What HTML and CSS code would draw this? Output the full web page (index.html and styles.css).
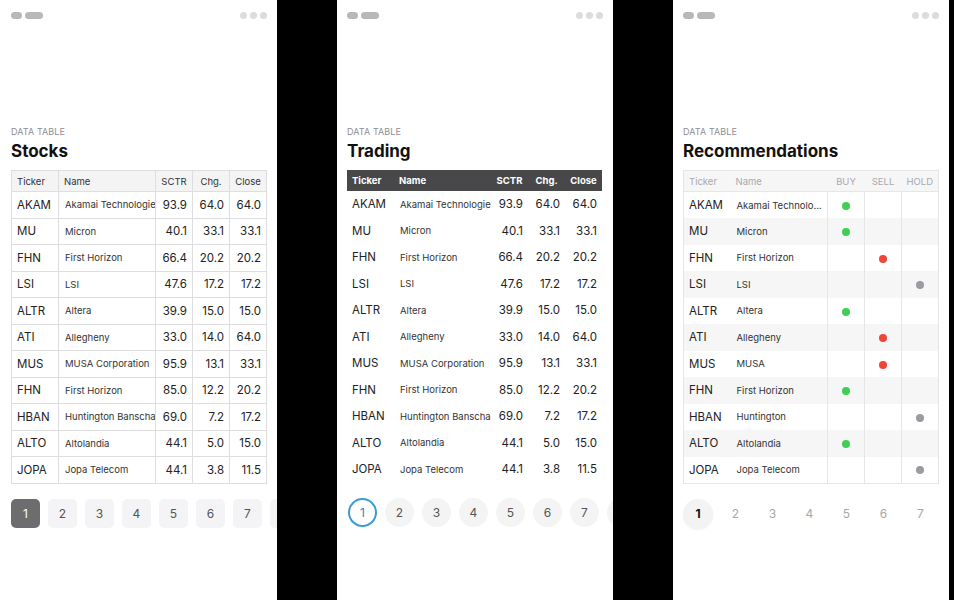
FILE: index.html
```html
<!DOCTYPE html>
<html>
<head>
<meta charset="utf-8">
<link rel="stylesheet" href="styles.css">
</head>
<body>
<div class="screens">
  <!-- Panel 1 -->
  <section class="panel">
    <div class="topbar"><div class="pills"><span class="pill s"></span><span class="pill l"></span></div><div class="dots"><span></span><span></span><span></span></div></div>
    <div class="label">DATA TABLE</div>
    <h1 class="title">Stocks</h1>
    <table class="tbl t-grid">
      <colgroup><col class="c1"><col class="c2"><col class="c3"><col class="c4"><col class="c5"></colgroup>
      <thead><tr><th>Ticker</th><th>Name</th><th class="num">SCTR</th><th class="num">Chg.</th><th class="num">Close</th></tr></thead>
      <tbody>
        <tr><td>AKAM</td><td class="nm"><div class="clip">Akamai Technologies</div></td><td class="num">93.9</td><td class="num">64.0</td><td class="num">64.0</td></tr>
        <tr><td>MU</td><td class="nm">Micron</td><td class="num">40.1</td><td class="num">33.1</td><td class="num">33.1</td></tr>
        <tr><td>FHN</td><td class="nm">First Horizon</td><td class="num">66.4</td><td class="num">20.2</td><td class="num">20.2</td></tr>
        <tr><td>LSI</td><td class="nm">LSI</td><td class="num">47.6</td><td class="num">17.2</td><td class="num">17.2</td></tr>
        <tr><td>ALTR</td><td class="nm">Altera</td><td class="num">39.9</td><td class="num">15.0</td><td class="num">15.0</td></tr>
        <tr><td>ATI</td><td class="nm">Allegheny</td><td class="num">33.0</td><td class="num">14.0</td><td class="num">64.0</td></tr>
        <tr><td>MUS</td><td class="nm">MUSA Corporation</td><td class="num">95.9</td><td class="num">13.1</td><td class="num">33.1</td></tr>
        <tr><td>FHN</td><td class="nm">First Horizon</td><td class="num">85.0</td><td class="num">12.2</td><td class="num">20.2</td></tr>
        <tr><td>HBAN</td><td class="nm"><div class="clip">Huntington Banschares</div></td><td class="num">69.0</td><td class="num">7.2</td><td class="num">17.2</td></tr>
        <tr><td>ALTO</td><td class="nm">Altolandia</td><td class="num">44.1</td><td class="num">5.0</td><td class="num">15.0</td></tr>
        <tr><td>JOPA</td><td class="nm">Jopa Telecom</td><td class="num">44.1</td><td class="num">3.8</td><td class="num">11.5</td></tr>
      </tbody>
    </table>
    <nav class="pager p-square">
      <span class="pg on">1</span><span class="pg">2</span><span class="pg">3</span><span class="pg">4</span><span class="pg">5</span><span class="pg">6</span><span class="pg">7</span><span class="pg">8</span>
    </nav>
  </section>

  <!-- Panel 2 -->
  <section class="panel">
    <div class="topbar"><div class="pills"><span class="pill s"></span><span class="pill l"></span></div><div class="dots"><span></span><span></span><span></span></div></div>
    <div class="label">DATA TABLE</div>
    <h1 class="title">Trading</h1>
    <table class="tbl t-dark">
      <colgroup><col class="c1"><col class="c2"><col class="c3"><col class="c4"><col class="c5"></colgroup>
      <thead><tr><th>Ticker</th><th>Name</th><th class="num">SCTR</th><th class="num">Chg.</th><th class="num">Close</th></tr></thead>
      <tbody>
        <tr><td>AKAM</td><td class="nm"><div class="clip">Akamai Technologies</div></td><td class="num">93.9</td><td class="num">64.0</td><td class="num">64.0</td></tr>
        <tr><td>MU</td><td class="nm">Micron</td><td class="num">40.1</td><td class="num">33.1</td><td class="num">33.1</td></tr>
        <tr><td>FHN</td><td class="nm">First Horizon</td><td class="num">66.4</td><td class="num">20.2</td><td class="num">20.2</td></tr>
        <tr><td>LSI</td><td class="nm">LSI</td><td class="num">47.6</td><td class="num">17.2</td><td class="num">17.2</td></tr>
        <tr><td>ALTR</td><td class="nm">Altera</td><td class="num">39.9</td><td class="num">15.0</td><td class="num">15.0</td></tr>
        <tr><td>ATI</td><td class="nm">Allegheny</td><td class="num">33.0</td><td class="num">14.0</td><td class="num">64.0</td></tr>
        <tr><td>MUS</td><td class="nm">MUSA Corporation</td><td class="num">95.9</td><td class="num">13.1</td><td class="num">33.1</td></tr>
        <tr><td>FHN</td><td class="nm">First Horizon</td><td class="num">85.0</td><td class="num">12.2</td><td class="num">20.2</td></tr>
        <tr><td>HBAN</td><td class="nm"><div class="clip">Huntington Banschares</div></td><td class="num">69.0</td><td class="num">7.2</td><td class="num">17.2</td></tr>
        <tr><td>ALTO</td><td class="nm">Altolandia</td><td class="num">44.1</td><td class="num">5.0</td><td class="num">15.0</td></tr>
        <tr><td>JOPA</td><td class="nm">Jopa Telecom</td><td class="num">44.1</td><td class="num">3.8</td><td class="num">11.5</td></tr>
      </tbody>
    </table>
    <nav class="pager p-circle">
      <span class="pg on">1</span><span class="pg">2</span><span class="pg">3</span><span class="pg">4</span><span class="pg">5</span><span class="pg">6</span><span class="pg">7</span><span class="pg">8</span>
    </nav>
  </section>

  <!-- Panel 3 -->
  <section class="panel">
    <div class="topbar"><div class="pills"><span class="pill s"></span><span class="pill l"></span></div><div class="dots"><span></span><span></span><span></span></div></div>
    <div class="label">DATA TABLE</div>
    <h1 class="title">Recommendations</h1>
    <table class="tbl t-rec">
      <colgroup><col class="c1"><col class="c2"><col class="c3"><col class="c4"><col class="c5"></colgroup>
      <thead><tr><th>Ticker</th><th>Name</th><th class="ctr">BUY</th><th class="ctr">SELL</th><th class="ctr">HOLD</th></tr></thead>
      <tbody>
        <tr><td>AKAM</td><td class="nm ell">Akamai Technologies</td><td class="v"><i class="dot buy"></i></td><td class="v"></td><td class="v"></td></tr>
        <tr><td>MU</td><td class="nm">Micron</td><td class="v"><i class="dot buy"></i></td><td class="v"></td><td class="v"></td></tr>
        <tr><td>FHN</td><td class="nm">First Horizon</td><td class="v"></td><td class="v"><i class="dot sell"></i></td><td class="v"></td></tr>
        <tr><td>LSI</td><td class="nm">LSI</td><td class="v"></td><td class="v"></td><td class="v"><i class="dot hold"></i></td></tr>
        <tr><td>ALTR</td><td class="nm">Altera</td><td class="v"><i class="dot buy"></i></td><td class="v"></td><td class="v"></td></tr>
        <tr><td>ATI</td><td class="nm">Allegheny</td><td class="v"></td><td class="v"><i class="dot sell"></i></td><td class="v"></td></tr>
        <tr><td>MUS</td><td class="nm">MUSA</td><td class="v"></td><td class="v"><i class="dot sell"></i></td><td class="v"></td></tr>
        <tr><td>FHN</td><td class="nm">First Horizon</td><td class="v"><i class="dot buy"></i></td><td class="v"></td><td class="v"></td></tr>
        <tr><td>HBAN</td><td class="nm">Huntington</td><td class="v"></td><td class="v"></td><td class="v"><i class="dot hold"></i></td></tr>
        <tr><td>ALTO</td><td class="nm">Altolandia</td><td class="v"><i class="dot buy"></i></td><td class="v"></td><td class="v"></td></tr>
        <tr><td>JOPA</td><td class="nm">Jopa Telecom</td><td class="v"></td><td class="v"></td><td class="v"><i class="dot hold"></i></td></tr>
      </tbody>
    </table>
    <nav class="pager p-plain">
      <span class="pg on">1</span><span class="pg">2</span><span class="pg">3</span><span class="pg">4</span><span class="pg">5</span><span class="pg">6</span><span class="pg">7</span>
    </nav>
  </section>
</div>
</body>
</html>
```

FILE: styles.css
```css
* { box-sizing: border-box; }
html, body { margin: 0; padding: 0; }
body {
  background: #000;
  font-family: Inter, "Noto Sans", "Liberation Sans", sans-serif;
  color: #1c1c1e;
  width: 954px;
  height: 600px;
  overflow: hidden;
}
.screens {
  display: flex;
  gap: 60px;
  height: 600px;
}
.panel {
  background: #fff;
  width: 276px;
  height: 600px;
  padding: 12px 10px 0 10px;
  overflow: hidden;
  display: flex;
  flex-direction: column;
}
.panel:first-child { width: 277px; padding-left: 11px; }

.topbar {
  display: flex;
  justify-content: space-between;
  align-items: center;
  height: 7px;
}
.pills { display: flex; gap: 3px; }
.pill { display: block; height: 7px; border-radius: 4px; background: #b8b8ba; }
.pill.s { width: 11px; }
.pill.l { width: 18px; }
.dots { display: flex; gap: 3px; }
.dots span { width: 7px; height: 7px; border-radius: 50%; background: #dcdcde; display: block; }

.label {
  margin-top: 107px;
  font-size: 9px;
  line-height: 11px;
  letter-spacing: 0.1px;
  color: #8e8e93;
}
.title {
  margin: 4px 0 0 0;
  font-size: 17px;
  line-height: 20px;
  font-weight: 700;
  color: #111;
}

.tbl {
  margin-top: 9px;
  width: 255px;
  table-layout: fixed;
  border-collapse: collapse;
  border-spacing: 0;
}
.c1 { width: 47px; }
.c2 { width: 97px; }
.c3, .c4, .c5 { width: 37px; }
.tbl th {
  height: 21px;
  font-size: 9.5px;
  font-weight: 400;
  text-align: left;
  padding: 0 5px;
  white-space: nowrap;
}
.tbl td {
  height: 26.5px;
  font-size: 11.5px;
  padding: 0 5px;
  white-space: nowrap;
  overflow: hidden;
  color: #222;
}
.tbl td.nm { font-size: 9.5px; padding-left: 6px; padding-right: 0; color: #333; }
.clip { width: 91px; overflow: hidden; white-space: nowrap; }
.tbl td.nm.ell { text-overflow: ellipsis; padding-right: 4px; }
.tbl .num { text-align: right; }
.tbl th.num { text-align: center; padding: 0 2px; }

/* grid style */
.t-grid th, .t-grid td { border: 1px solid #dedee0; }
.t-grid th { background: #f4f4f5; color: #333; }

/* dark header */
.t-dark th { background: #48484a; color: #fff; font-weight: 700; }
.t-dark td { border: none; }

/* recommendations */
.t-rec { border: 1px solid #e6e6e8; }
.t-rec thead th { background: #f6f6f7; color: #a9a9ad; border-bottom: 1px solid #e6e6e8; }
.t-rec th.ctr { text-align: center; padding: 0; }
.t-rec tbody tr:nth-child(even) td { background: #f6f6f7; }
.t-rec td.v { border-left: 1px solid #e6e6e8; text-align: center; padding: 0; }
.dot { display: inline-block; width: 8px; height: 8px; border-radius: 50%; vertical-align: middle; }
.dot.buy { background: #3fcf55; }
.dot.sell { background: #f1453a; }
.dot.hold { background: #9a9aa0; }

/* pagination */
.pager {
  display: flex;
  gap: 8px;
  margin-top: 15px;
  flex-wrap: nowrap;
}
.pg {
  flex: none;
  width: 29px;
  height: 29px;
  display: flex;
  align-items: center;
  justify-content: center;
  font-size: 12px;
  color: #555;
}
.p-square .pg { background: #f4f4f6; border-radius: 5px; }
.p-square .pg.on { background: #6d6d70; color: #fff; }
.p-circle { padding-left: 1px; }
.p-circle .pg { background: #f4f4f5; border-radius: 50%; }
.p-circle .pg.on { background: #fff; border: 2px solid #3f9bd4; color: #2d86c2; }
.p-plain .pg { color: #a7a7ab; }
.p-plain .pg.on { background: #f3f3f4; border-radius: 50%; color: #111; font-weight: 700; box-shadow: 0 1px 2px rgba(0,0,0,0.06); width: 30px; height: 30px; }
```
